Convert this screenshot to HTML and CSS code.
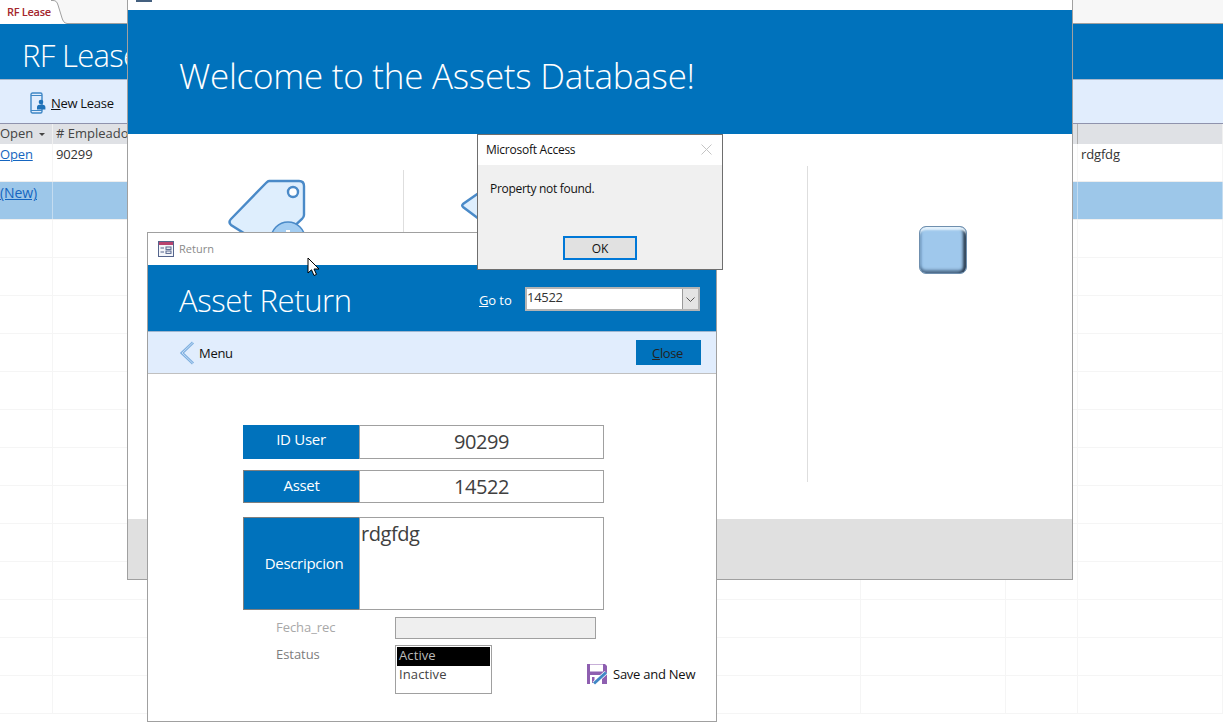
FILE: index.html
```html
<!DOCTYPE html>
<html lang="en">
<head>
<meta charset="utf-8">
<title>RF Lease</title>
<link rel="stylesheet" href="styles.css">
</head>
<body>
<div class="app">
  <div class="tabbar">
    <div class="tab">RF Lease</div>
    <svg class="tab-curve" width="16" height="24" viewBox="0 0 16 24"><path d="M0 0.5H2C5 0.5 6 2 7 5L11 18C12 21 13 23 16 23.5H0Z" fill="#fff"/><path d="M0 0.5H2C5 0.5 6 2 7 5L11 18C12 21 13 23 16 23.5" fill="none" stroke="#a0a0a0"/></svg>
    <div class="tab-rest"></div>
  </div>
  <header class="list-head"><h1 class="list-title">RF Lease</h1></header>
  <div class="toolbar">
    <svg class="phone-icon" width="16" height="22" viewBox="0 0 16 22"><rect x="1" y="1" width="11" height="20" rx="1.5" fill="#e1edfd" stroke="#3f87c5" stroke-width="1.4"/><path d="M1 3.5H12M1 18.5H12" stroke="#3f87c5"/><circle cx="11" cy="10" r="2.3" fill="#1f72b8"/><path d="M7 17.5V15C7 13 9 12.4 11 12.4S15.4 13 15.4 15V17.5Z" fill="#1f72b8"/></svg>
    <span class="tool-label"><u>N</u>ew Lease</span>
  </div>
  <div class="grid-row grid-header">
    <div class="cell head-cell">Open<span class="sort-caret"></span></div>
    <div class="cell head-cell"># Empleado</div>
    <div class="cell"></div><div class="cell"></div><div class="cell"></div><div class="cell head-mark"></div><div class="cell"></div>
  </div>
  <div class="grid-row data-row">
    <div class="cell"><a class="link">Open</a></div>
    <div class="cell value-cell">90299</div>
    <div class="cell"></div><div class="cell"></div><div class="cell"></div><div class="cell"></div>
    <div class="cell value-cell">rdgfdg</div>
  </div>
  <div class="grid-row new-row">
    <div class="cell"><a class="link">(New)</a></div>
    <div class="cell"></div><div class="cell"></div><div class="cell"></div><div class="cell"></div><div class="cell"></div><div class="cell"></div>
  </div>
  <div class="grid-row empty-row"><div class="cell"></div><div class="cell"></div><div class="cell"></div><div class="cell"></div><div class="cell"></div><div class="cell"></div><div class="cell"></div></div>
  <div class="grid-row empty-row"><div class="cell"></div><div class="cell"></div><div class="cell"></div><div class="cell"></div><div class="cell"></div><div class="cell"></div><div class="cell"></div></div>
  <div class="grid-row empty-row"><div class="cell"></div><div class="cell"></div><div class="cell"></div><div class="cell"></div><div class="cell"></div><div class="cell"></div><div class="cell"></div></div>
  <div class="grid-row empty-row"><div class="cell"></div><div class="cell"></div><div class="cell"></div><div class="cell"></div><div class="cell"></div><div class="cell"></div><div class="cell"></div></div>
  <div class="grid-row empty-row"><div class="cell"></div><div class="cell"></div><div class="cell"></div><div class="cell"></div><div class="cell"></div><div class="cell"></div><div class="cell"></div></div>
  <div class="grid-row empty-row"><div class="cell"></div><div class="cell"></div><div class="cell"></div><div class="cell"></div><div class="cell"></div><div class="cell"></div><div class="cell"></div></div>
  <div class="grid-row empty-row"><div class="cell"></div><div class="cell"></div><div class="cell"></div><div class="cell"></div><div class="cell"></div><div class="cell"></div><div class="cell"></div></div>
  <div class="grid-row empty-row"><div class="cell"></div><div class="cell"></div><div class="cell"></div><div class="cell"></div><div class="cell"></div><div class="cell"></div><div class="cell"></div></div>
  <div class="grid-row empty-row"><div class="cell"></div><div class="cell"></div><div class="cell"></div><div class="cell"></div><div class="cell"></div><div class="cell"></div><div class="cell"></div></div>
  <div class="grid-row empty-row"><div class="cell"></div><div class="cell"></div><div class="cell"></div><div class="cell"></div><div class="cell"></div><div class="cell"></div><div class="cell"></div></div>
  <div class="grid-row empty-row"><div class="cell"></div><div class="cell"></div><div class="cell"></div><div class="cell"></div><div class="cell"></div><div class="cell"></div><div class="cell"></div></div>
  <div class="grid-row empty-row"><div class="cell"></div><div class="cell"></div><div class="cell"></div><div class="cell"></div><div class="cell"></div><div class="cell"></div><div class="cell"></div></div>
  <div class="grid-row empty-row"><div class="cell"></div><div class="cell"></div><div class="cell"></div><div class="cell"></div><div class="cell"></div><div class="cell"></div><div class="cell"></div></div>
</div>

<section class="win welcome">
  <div class="welcome-top"><span class="welcome-top-icon"></span></div>
  <div class="welcome-banner"><h1 class="welcome-title">Welcome to the Assets Database!</h1></div>
  <div class="welcome-body">
    <div class="panel panel-a">
      <svg class="tag tag-a" width="80" height="70" viewBox="0 0 80 70"><path d="M41 2H71C74 2 76 4 76 7V36C76 38 75 39 74 40L44 68C42 70 40 70 38 68L3 46C1 44 1 42 3 40L38 4C39 3 40 2 41 2Z" fill="#deeefd" stroke="#4a8ac8" stroke-width="2.4"/><circle cx="65" cy="13" r="5" fill="#fff" stroke="#4a8ac8" stroke-width="2.4"/><circle cx="60" cy="60" r="17" fill="#a3cdf2" stroke="#4a8ac8" stroke-width="1.5"/><rect x="58" y="51" width="4" height="4" fill="#fff"/></svg>
    </div>
    <div class="panel panel-b">
      <svg class="tag tag-b" width="24" height="34" viewBox="0 0 24 34"><path d="M22 1L2 15C1 16 1 17 2 18L22 33" fill="#deeefd" stroke="#4a8ac8" stroke-width="2.4"/></svg>
    </div>
    <div class="panel panel-c"><div class="bevel-btn"></div></div>
  </div>
  <div class="welcome-footer"></div>
</section>

<section class="win ret">
  <div class="ret-titlebar">
    <svg width="16" height="16" viewBox="0 0 16 16"><rect x="0.5" y="0.5" width="15" height="15" fill="#f4f6fa" stroke="#54648c"/><rect x="1" y="1" width="14" height="3" fill="#b8436f"/><path d="M2.5 7H6M2.5 11H6" stroke="#54648c"/><rect x="8" y="6" width="5" height="2.4" fill="none" stroke="#54648c"/><rect x="8" y="10" width="5" height="2.4" fill="none" stroke="#54648c"/></svg>
    <span class="ret-title-text">Return</span>
  </div>
  <div class="ret-banner">
    <h2 class="ret-title">Asset Return</h2>
    <label class="goto-label"><u>G</u>o to</label>
    <div class="combo"><span class="combo-value">14522</span><span class="combo-btn"><svg width="9" height="5" viewBox="0 0 9 5"><path d="M0.5 0.5L4.5 4.5L8.5 0.5" fill="none" stroke="#555"/></svg></span></div>
  </div>
  <div class="ret-strip">
    <svg class="chevron" width="16" height="24" viewBox="0 0 16 24"><path d="M14 1.5L3 12L14 22.5" fill="none" stroke="#7fb0e0" stroke-width="3"/><path d="M14 1.5L3 12L14 22.5" fill="none" stroke="#c5dcf5" stroke-width="1"/></svg>
    <span class="menu-text">Menu</span>
    <button class="close-btn"><u>C</u>lose</button>
  </div>
  <div class="ret-form">
    <div class="field field-short"><div class="field-label">ID User</div><div class="field-value">90299</div></div>
    <div class="field field-short field-b"><div class="field-label">Asset</div><div class="field-value">14522</div></div>
    <div class="field field-tall field-b"><div class="field-label">Descripcion</div><div class="field-value field-text">rdgfdg</div></div>
    <div class="sub-row sub-date"><span class="sub-label sub-dim">Fecha_rec</span><div class="date-input"></div></div>
    <div class="sub-row sub-status">
      <span class="sub-label">Estatus</span>
      <div class="listbox"><div class="opt opt-on">Active</div><div class="opt">Inactive</div></div>
      <div class="save-btn">
        <svg width="22" height="22" viewBox="0 0 22 22"><path d="M1 1H19L21 3V21H1Z" fill="#8e5fb0"/><rect x="4" y="1.5" width="13" height="7" fill="#fff"/><rect x="4" y="12" width="12" height="9" fill="#fff"/><rect x="6" y="14" width="2.5" height="6" fill="#8e5fb0"/><path d="M8 20.5L20 9.5" stroke="#fff" stroke-width="4.4"/><path d="M8 20.5L20 9.5" stroke="#3f87c5" stroke-width="3"/></svg>
        <span>Save and New</span>
      </div>
    </div>
  </div>
</section>

<section class="win dialog">
  <div class="dialog-title"><span>Microsoft Access</span><svg width="11" height="11" viewBox="0 0 11 11"><path d="M0.5 0.5L10.5 10.5M10.5 0.5L0.5 10.5" stroke="#c4c4c4"/></svg></div>
  <div class="dialog-body">
    <p class="dialog-msg">Property not found.</p>
    <button class="ok-btn">OK</button>
  </div>
</section>

<svg class="cursor" width="13" height="20" viewBox="0 0 13 20"><path d="M1 1V16L4.5 12.8L7 18.5L9.5 17.4L7 12H12Z" fill="#fff" stroke="#000"/></svg>
</body>
</html>
```

FILE: styles.css
```css
* { box-sizing: border-box; }
html, body { margin: 0; padding: 0; height: 100%; overflow: hidden; background: #fff; }
body { position: relative; font-family: "Open Sans", "Noto Sans", sans-serif; color: #333; }
h1, h2, p { margin: 0; font-weight: 300; }

.app { display: flex; flex-direction: column; height: 723px; overflow: hidden; }

.tabbar { display: flex; height: 24px; flex: none; background: #f7f7f7; }
.tab { width: 51px; padding: 4px 0 0 7px; background: #fff; font-size: 11px; font-weight: 600; color: #a4262c; letter-spacing: -0.3px; border-bottom: 1px solid #fff; white-space: nowrap; }
.tab-curve { flex: none; display: block; }
.tab-rest { flex: 1; border-bottom: 1px solid #a0a0a0; }

.list-head { height: 56px; flex: none; background: #0072bc; border-bottom: 1px solid #a8b8cc; padding-left: 22px; overflow: hidden; }
.list-title { color: #fff; font-size: 31px; line-height: 62px; letter-spacing: -0.7px; white-space: nowrap; }

.toolbar { height: 44px; flex: none; background: #e1edfd; border-bottom: 1px solid #8f93ad; display: flex; align-items: center; padding: 2px 0 0 30px; gap: 5px; }
.phone-icon { flex: none; }
.tool-label { font-size: 13px; color: #111; letter-spacing: -0.3px; }

.grid-row { display: grid; grid-template-columns: 53px 283px 86px 439px 145px 72px 1fr; flex: none; }
.cell { border-right: 1px solid #f5f5f5; font-size: 13px; padding-left: 3px; letter-spacing: -0.15px; white-space: nowrap; }
.cell:first-child { padding-left: 0; }
.grid-header { height: 20px; background: #dfe1e5; }
.grid-header .cell { border-right: 1px solid #f0f0f0; }
.grid-header .head-mark { border-right-color: #b0b0b0; }
.head-cell { line-height: 18px; color: #444; letter-spacing: 0; }
.sort-caret { display: inline-block; margin-left: 6px; vertical-align: middle; border: 3px solid transparent; border-top: 3px solid #444; border-bottom: 0; }
.data-row { height: 38px; border-bottom: 1px solid #eee; line-height: 21px; }
.value-cell { padding-left: 3px; color: #333; }
.link { color: #1565c0; text-decoration: underline; }
.new-row { height: 38px; background: #9dc7e9; line-height: 21px; border-bottom: 1px solid #f0f0f0; }
.new-row .cell { border-right-color: #c4dcf0; }
.new-row .link { font-size: 14px; letter-spacing: -0.1px; }
.empty-row { height: 38px; border-bottom: 1px solid #f5f5f5; }

.win { position: absolute; border: 1px solid #a0a0a0; background: #fff; }

.welcome { left: 127px; top: -1px; width: 946px; height: 581px; display: flex; flex-direction: column; overflow: hidden; }
.welcome-top { height: 10px; flex: none; position: relative; }
.welcome-top-icon { position: absolute; left: 8px; top: 0; width: 16px; height: 2px; background: #44607f; }
.welcome-banner { height: 124px; flex: none; background: #0072bc; padding-left: 51px; }
.welcome-title { color: #fff; font-size: 35px; line-height: 132px; letter-spacing: -0.25px; white-space: nowrap; }
.welcome-body { flex: 1; display: flex; }
.welcome-footer { height: 60px; flex: none; background: #e0e0e0; }
.panel { position: relative; height: 316px; }
.panel-a { width: 276px; margin-top: 36px; border-right: 1px solid #dedede; }
.panel-b { width: 404px; margin-top: 32px; border-right: 1px solid #dedede; }
.panel-c { flex: 1; margin-top: 32px; display: flex; justify-content: center; padding: 60px 0 0 6px; }
.tag { display: block; position: absolute; }
.tag-a { left: 100px; top: 9px; }
.tag-b { left: 57px; top: 23px; }
.bevel-btn { width: 48px; height: 48px; border-radius: 7px; background: #9fc8ec; border: 1px solid #6f8fae; box-shadow: inset 0 4px 2px -1px #e4f2fc, inset -4px 0 3px -1px #2c3e52, inset 0 -4px 3px -1px #567594, inset 3px 0 2px -1px #7ea9d0; }

.ret { left: 147px; top: 232px; width: 570px; height: 490px; display: flex; flex-direction: column; overflow: hidden; }
.ret-titlebar { height: 32px; flex: none; display: flex; align-items: center; gap: 5px; padding: 0 0 1px 10px; }
.ret-title-text { font-size: 11px; color: #8a8a8a; }
.ret-banner { height: 67px; flex: none; background: #0072bc; display: flex; align-items: center; padding: 4px 0 0 31px; border-bottom: 1px solid #9fb6cf; }
.ret-title { color: #fff; font-size: 31px; letter-spacing: -0.4px; width: 300px; font-weight: 300; flex: none; }
.goto-label { color: #fff; font-size: 13px; width: 46px; flex: none; letter-spacing: -0.1px; }
.combo { width: 175px; height: 24px; flex: none; display: flex; border: 2px solid #b4b4b4; background: #fff; margin-top: -2px; }
.combo-value { flex: 1; font-size: 13px; color: #333; line-height: 16px; letter-spacing: -0.3px; }
.combo-btn { width: 16px; flex: none; background: #e4e4e4; border-left: 1px solid #9a9a9a; display: flex; align-items: center; justify-content: center; }
.ret-strip { height: 42px; flex: none; background: #e1edfd; border-bottom: 1px solid #c0c0c0; display: flex; align-items: center; padding-left: 31px; }
.chevron { flex: none; }
.menu-text { font-size: 13px; color: #111; margin-left: 4px; letter-spacing: -0.3px; }
.close-btn { margin-left: auto; margin-right: 15px; width: 65px; height: 25px; border: 0; background: #0072bc; color: #222; font: 13px "Open Sans", sans-serif; letter-spacing: -0.4px; padding: 0 2px 0 0; }

.ret-form { flex: 1; padding: 51px 0 0 95px; position: relative; }
.field { display: flex; width: 361px; }
.field-short { height: 34px; }
.field-short.field-b { height: 33px; margin-top: 11px; }
.field-tall { height: 93px; margin-top: 14px; }
.field-label { width: 116px; flex: none; background: #0072bc; color: #fff; font-size: 15px; display: flex; align-items: center; justify-content: center; letter-spacing: -0.3px; padding-bottom: 6px; }
.field-b .field-label { border: 1px solid #7f7f7f; border-right: 0; padding-bottom: 4px; }
.field-value { flex: 1; border: 1px solid #a0a0a0; font-size: 20px; text-align: center; color: #404040; line-height: 32px; letter-spacing: -0.45px; }
.field-text { text-align: left; padding-left: 1px; line-height: 32px; }
.field-tall .field-label { padding: 0 0 2px 5px; }
.sub-row { display: flex; padding-left: 33px; }
.sub-label { width: 119px; flex: none; font-size: 13px; color: #7d7d7d; letter-spacing: -0.05px; }
.sub-dim { color: #a8a8a8; line-height: 20px; }
.sub-date { margin-top: 7px; height: 22px; }
.date-input { width: 201px; height: 22px; background: #efefef; border: 1px solid #a0a0a0; }
.sub-status { margin-top: 6px; position: relative; }
.sub-status .sub-label { line-height: 19px; }
.listbox { width: 97px; height: 49px; border: 1px solid #a0a0a0; padding: 1px; flex: none; }
.opt { height: 19px; font-size: 13px; line-height: 16px; padding-left: 2px; color: #444; letter-spacing: 0.1px; }
.opt-on { background: #000; color: #bbb; }
.save-btn { display: flex; align-items: center; gap: 5px; margin: 18px 0 0 94px; height: 22px; font-size: 13px; color: #111; white-space: nowrap; letter-spacing: -0.25px; }

.dialog { left: 477px; top: 134px; width: 246px; height: 136px; border-color: #6e6e6e; background: #f0f0f0; display: flex; flex-direction: column; }
.dialog-title { height: 30px; flex: none; background: #fff; display: flex; align-items: center; justify-content: space-between; padding: 0 10px 2px 8px; font-size: 12px; color: #111; letter-spacing: -0.25px; }
.dialog-body { flex: 1; position: relative; }
.dialog-msg { font-size: 12px; font-weight: 400; color: #111; padding: 15px 0 0 12px; letter-spacing: -0.3px; }
.ok-btn { position: absolute; left: 85px; top: 71px; width: 74px; height: 24px; background: #e1e1e1; border: 2px solid #0078d7; font: 12px "Open Sans", sans-serif; color: #111; padding: 0; }

.cursor { position: absolute; left: 307px; top: 257px; }
```
